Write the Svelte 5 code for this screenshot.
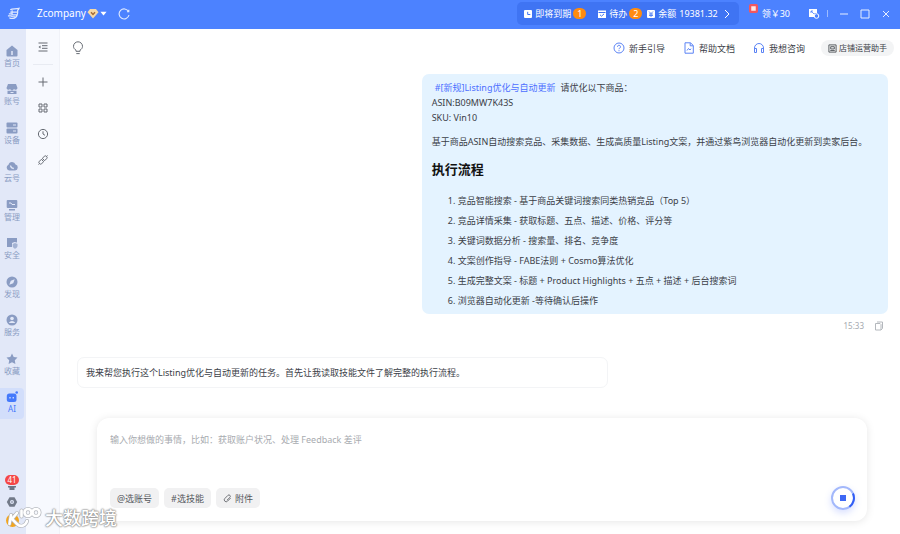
<script lang="ts">
	const navItems = [
		{icon: "home", label: "首页"},
		{icon: "shop", label: "账号"},
		{icon: "server", label: "设备"},
		{icon: "cloud", label: "云号"},
		{icon: "monitor", label: "管理"},
		{icon: "shield", label: "安全"},
		{icon: "compass", label: "发现"},
		{icon: "user", label: "服务"},
		{icon: "star", label: "收藏"},
		{icon: "robot", label: "AI"}
	];

	const steps = [
		"竞品智能搜索 - 基于商品关键词搜索同类热销竞品（Top 5）",
		"竞品详情采集 - 获取标题、五点、描述、价格、评分等",
		"关键词数据分析 - 搜索量、排名、竞争度",
		"文案创作指导 - FABE法则 + Cosmo算法优化",
		"生成完整文案 - 标题 + Product Highlights + 五点 + 描述 + 后台搜索词",
		"浏览器自动化更新 -等待确认后操作"
	];

	let active = $state("AI");
	let message = $state("");
</script>

<div class="app">
	<header class="titlebar">
		<svg class="logo" viewBox="0 0 14 14" fill="none" stroke="#dfe9ff" stroke-width="1.3">
			<path d="M3.500 3C6 1.500 9 2.500 13 1.500c-.5 1.500-1 1.800-1.500 2 .3 4-.5 7-3.500 8.500-2 .6-4 .4-5.500-.5M3.500 5.500h8M2 7.500h3l1 1h4.500M1 9.500h3.500l1 1h3.500M5.500 3.500v4" />
		</svg>
		<button class="company">
			Zcompany
			<svg class="gem" viewBox="0 0 12 11">
				<path d="M3 1h6l2.500 3.300L6 10.500.5 4.300z" fill="#f7d9a5" />
				<path d="M4 4.300 6 6.500l2-2.200" fill="none" stroke="#a36a35" stroke-width="1.400" />
			</svg>
			<svg class="caret" viewBox="0 0 8 5"><path d="M.5.500h7L4 4.800z" fill="#fff" /></svg>
		</button>
		<button class="refresh" aria-label="刷新">
			<svg viewBox="0 0 12 12" fill="none" stroke="#dfe9ff" stroke-width="1.100">
				<path d="M10.500 3.500A5 5 0 1 0 11 7M10.800 1.800v2H9" />
			</svg>
		</button>
		<div class="account">
			<button>
				<svg viewBox="0 0 10 10"><rect x="1" y="1" width="8" height="8" rx="1" fill="#fff" /><path d="M4.700 2.800v2.700h2.600" fill="none" stroke="#3f74f3" /></svg>
				即将到期 <span class="count">1</span>
			</button>
			<button class="todo">
				<svg viewBox="0 0 10 10"><path d="M1 1.500h8V9H1z" fill="#fff" /><path d="M1.500 3.500h7M3 5.800l1.500 1.400L7 4.900" fill="none" stroke="#3f74f3" /></svg>
				待办 <span class="count">2</span>
			</button>
			<button class="balance">
				<svg viewBox="0 0 10 10"><rect x="1" y="1" width="8" height="8" rx="1" fill="#fff" /><path d="m3 2.500 2 2 2-2M5 4.500V8M3 5h4M3 6.500h4" fill="none" stroke="#3f74f3" stroke-width=".8" /></svg>
				余额 <span class="amount">19381.32</span>
				<svg class="chevron" viewBox="0 0 6 10"><path d="m1 1 4 4-4 4" fill="none" stroke="#fff" /></svg>
			</button>
		</div>
		<button class="gift">
			<svg viewBox="0 0 10 10"><rect width="10" height="10" rx="2" fill="#f2575f" /><path d="M2.500 2.500h5v5h-5z" fill="#ffe9e4" /></svg>
			领￥30
		</button>
		<button class="window-tool" aria-label="切换窗口">
			<svg viewBox="0 0 12 12"><path d="M1 1h8v4H6.500v4H1z" fill="#fff" /><path d="m3 3 3 3M3 5V3h2" fill="none" stroke="#4c82ff" stroke-width=".8" /><circle cx="8.500" cy="8" r="2.300" fill="none" stroke="#fff" /></svg>
		</button>
		<span class="bar"></span>
		<button class="win" aria-label="最小化"><svg viewBox="0 0 10 10"><path d="M1 5h8" /></svg></button>
		<button class="win" aria-label="最大化"><svg viewBox="0 0 10 10"><path d="M1 1h8v8H1z" /></svg></button>
		<button class="win" aria-label="关闭"><svg viewBox="0 0 10 10"><path d="m2 2 6 6M8 2 2 8" /></svg></button>
	</header>

	<div class="body">
		<aside class="sidebar">
			<nav>
				{#each navItems as item}
					<button class:active={active === item.label} onclick={() => (active = item.label)}>
						<svg viewBox="0 0 12 12" fill="currentColor">
							{#if item.icon === "home"}
								<path d="M6 .500 11.500 5v5.500a1 1 0 0 1-1 1h-9a1 1 0 0 1-1-1V5z" /><path d="M6 6v4" stroke="#e2e8f8" stroke-width="1.500" />
							{:else if item.icon === "shop"}
								<path d="M2 1h8l1.500 4a2 2 0 0 1-3.600 1 2 2 0 0 1-3.800 0A2 2 0 0 1 .500 5zM1.500 7.700h9V11h-9z" /><path d="M4.500 9.500h3" stroke="#e2e8f8" />
							{:else if item.icon === "server"}
								<rect x=".5" y=".5" width="11" height="5" rx="1" /><rect x=".5" y="6.500" width="11" height="5" rx="1" /><path d="M7 3h3M7 9h3" stroke="#e2e8f8" />
							{:else if item.icon === "cloud"}
								<path d="M3 10.500a3 3 0 0 1-.5-5.700 3.600 3.600 0 0 1 7-.2A3 3 0 0 1 9 10.500z" /><path d="M4.500 5.500c.3 2 1.300 3 3.300 3" stroke="#e2e8f8" stroke-width="1.300" fill="none" />
							{:else if item.icon === "monitor"}
								<rect x=".7" y="1" width="10.600" height="8" rx="1" /><path d="M3 10h6v1.500H3z" /><path d="M3 4h2l1 1.500h3" stroke="#e2e8f8" fill="none" />
							{:else if item.icon === "shield"}
								<path d="M1 1h10v4.500L8.500 5 6 6v4H1z" /><path d="m9 6 2.500 1v2c0 1.200-1 2-2.500 2.700C7.500 11 6.700 10.200 6.700 9V7z" opacity=".7" />
							{:else if item.icon === "compass"}
								<circle cx="6" cy="6" r="5.500" /><path d="M8.700 3.300 7.200 7.200 3.300 8.700l1.500-3.900z" fill="#e2e8f8" />
							{:else if item.icon === "user"}
								<circle cx="6" cy="6" r="5.500" /><circle cx="6" cy="4.500" r="1.800" fill="#e2e8f8" /><path d="M2.800 9c1.200-2.700 5.200-2.700 6.400 0z" fill="#e2e8f8" />
							{:else if item.icon === "star"}
								<path d="m6 .500 1.700 3.400 3.800.6-2.700 2.700.6 3.800L6 9.200 2.600 11l.6-3.800L.500 4.500l3.800-.6z" />
							{:else}
								<rect x=".8" y="2.500" width="9.700" height="8.500" rx="2.500" /><path d="M4 6v1.500M7.200 6v1.500" stroke="#fff" /><circle cx="10.700" cy="1.500" r="1.300" />
							{/if}
						</svg>
						{item.label}
					</button>
				{/each}
			</nav>
			<div class="foot">
				<button aria-label="消息">
					<span class="unread">41</span>
					<svg class="bell" viewBox="0 0 8 4"><path d="M0 0h8v1.500H6.500V4h-5V1.500H0z" fill="#6d7484" /></svg>
				</button>
				<button aria-label="设置">
					<svg viewBox="0 0 12 12"><path d="m3.500 1.200h5L11.200 6 8.500 10.800h-5L.8 6z" fill="#727a89" /><circle cx="6" cy="6" r="2" fill="#dfe5f6" /><circle cx="6" cy="6" r=".8" fill="#727a89" /></svg>
				</button>
				<button class="avatar" aria-label="我的"></button>
			</div>
		</aside>

		<aside class="tools">
			<button aria-label="展开列表">
				<svg viewBox="0 0 12 12"><path d="M1.500 2h9M5 4.700h5.500M5 7.300h5.500M1.500 10h9" /><path d="M3.500 4.500v3L1.500 6z" fill="#666b73" stroke="none" /></svg>
			</button>
			<hr />
			<button aria-label="新建"><svg viewBox="0 0 12 12"><path d="M6 1.500v9M1.500 6h9" /></svg></button>
			<button aria-label="应用"><svg viewBox="0 0 12 12"><path d="M2 2h3v3H2zM7 2h3v3H7zM2 7h3v3H2zM7 7h3v3H7z" /></svg></button>
			<button aria-label="历史"><svg viewBox="0 0 12 12"><circle cx="6" cy="6" r="4.600" /><path d="M6 3.300V6l2 1.300" /></svg></button>
			<button aria-label="连接"><svg viewBox="0 0 12 12"><path d="m5.300 4.300 2-1.900a1.500 1.500 0 0 1 2.300 2.300l-2 2zM6.700 7.700l-2 1.900a1.500 1.500 0 0 1-2.300-2.300l2-2zM9.500 2.500 10.500 1.500M1.500 10.500l1-1" /></svg></button>
		</aside>

		<main>
			<div class="topline">
				<button class="bulb" aria-label="灵感">
					<svg viewBox="0 0 12 14"><path d="M4 10.300V9.200C2.500 8.300 1.500 7 1.500 5.300a4.500 4.500 0 0 1 9 0C10.500 7 9.500 8.300 8 9.200v1.100zM4.300 12.600h3.400" /></svg>
				</button>
				<a href="#guide">
					<svg viewBox="0 0 12 12"><circle cx="6" cy="6" r="5" /><path d="M4.500 4.800a1.500 1.500 0 1 1 2.200 1.300c-.5.2-.7.500-.7 1.100M6 8.200v1" /></svg>
					新手引导
				</a>
				<a href="#docs">
					<svg viewBox="0 0 12 12"><path d="M2 .800h5.500L10.300 3.500v7.700H2zM7.200 1v2.800h3M4 8.500l1.500-2L7 8l1-1.300" /></svg>
					帮助文档
				</a>
				<a href="#contact">
					<svg viewBox="0 0 12 12"><path d="M1.500 8V6a4.500 4.500 0 0 1 9 0v2M1.500 6.500h2v4h-2zM8.500 6.500h2v4h-2z" /></svg>
					我想咨询
				</a>
				<button class="assistant">
					<svg viewBox="0 0 10 10"><path d="M1 1h8v8H1zM3 3h4v2.500H3zM2.500 7.200h5" /></svg>
					店铺运营助手
				</button>
			</div>

			<section class="thread">
				<article class="request">
					<p><a class="skill" href="#skill">#[新规]Listing优化与自动更新</a>请优化以下商品：<br />ASIN:B09MW7K43S<br />SKU: Vin10</p>
					<p>基于商品ASIN自动搜索竞品、采集数据、生成高质量Listing文案，并通过紫鸟浏览器自动化更新到卖家后台。</p>
					<h2>执行流程</h2>
					<ol>
						{#each steps as step}
							<li>{step}</li>
						{/each}
					</ol>
				</article>
				<div class="meta">
					<time>15:33</time>
					<button aria-label="复制">
						<svg viewBox="0 0 10 10"><path d="M3 1h5.500v6.500L7 9M1.500 2.500H6L7 3.500V9H1.500z" /></svg>
					</button>
				</div>
				<article class="reply">我来帮您执行这个Listing优化与自动更新的任务。首先让我读取技能文件了解完整的执行流程。</article>
			</section>

			<form class="composer" onsubmit={(e) => e.preventDefault()}>
				<textarea bind:value={message} aria-label="消息" placeholder="输入你想做的事情，比如：获取账户状况、处理 Feedback 差评"></textarea>
				<div class="actions">
					<button type="button">@选账号</button>
					<button type="button">#选技能</button>
					<button type="button">
						<svg viewBox="0 0 10 10"><path d="M8.500 4.500 5 8a2 2 0 0 1-3-3l3.500-3.500a1.500 1.500 0 0 1 2.200 2.200L4.300 7" /></svg>
						附件
					</button>
					<button type="button" class="stop" aria-label="停止">
						<svg viewBox="0 0 24 24">
							<circle cx="12" cy="12" r="11" fill="#fff" stroke="#a3b8fb" stroke-width="2" />
							<path d="M22 7.500A11 11 0 0 1 18.500 20.800" fill="none" stroke="#315df5" stroke-width="2" />
							<rect x="9" y="9" width="6" height="6" fill="#3e68f5" stroke="none" />
						</svg>
					</button>
				</div>
			</form>
		</main>
	</div>

	<div class="watermark">
		<svg viewBox="0 0 34 24" fill="none" stroke-linecap="round">
			<g stroke="#b4b7bd" stroke-width="4"><path d="M3 9 1.500 18M9 7 4 13l5 5c4 4 9 1 10-3M13.500 4.500v6" /><circle cx="20" cy="6.500" r="3.500" /><circle cx="28" cy="6.500" r="3.500" /></g>
			<g stroke="#fff" stroke-width="2.600"><path d="M3 9 1.500 18M9 7 4 13l5 5c4 4 9 1 10-3M13.500 4.500v6" /><circle cx="20" cy="6.500" r="3.500" /><circle cx="28" cy="6.500" r="3.500" /></g>
		</svg>
		<span>大数跨境</span>
	</div>
</div>

<style>
	:global(body) {
		margin: 0;
	}

	.app {
		position: relative;
		display: flex;
		flex-direction: column;
		min-height: 100vh;
		font-family: "Noto Sans", "Noto Sans CJK SC", sans-serif;
		font-size: 9px;
		line-height: 15px;
		color: #3b4047;
		background: #fff;
	}

	button {
		display: flex;
		align-items: center;
		justify-content: center;
		border: 0;
		padding: 0;
		background: none;
		color: inherit;
		font: inherit;
		white-space: nowrap;
		cursor: pointer;
	}

	svg {
		display: block;
		flex: none;
		width: 12px;
		height: 12px;
	}

	a {
		color: inherit;
		text-decoration: none;
	}

	.titlebar {
		display: flex;
		align-items: center;
		height: 29px;
		box-sizing: border-box;
		padding: 0 9px 2px 7px;
		background: #4c82ff;
		color: #fff;
	}

	.logo {
		width: 13px;
		height: 13px;
	}

	.company {
		gap: 1px;
		margin-left: 17px;
		font-size: 10px;
	}

	.gem {
		width: 12px;
		height: 11px;
	}

	.caret {
		width: 7px;
		height: 5px;
	}

	.refresh {
		margin-left: 11px;
	}

	.account {
		display: flex;
		align-items: center;
		height: 23px;
		box-sizing: border-box;
		margin-left: auto;
		padding: 0 9px 0 6px;
		border-radius: 5px;
		background: #3f74f3;
	}

	.account button {
		gap: 2px;
	}

	.account svg {
		width: 10px;
		height: 10px;
	}

	.account .todo {
		margin-left: 11px;
	}

	.account .balance {
		margin-left: 4px;
	}

	.account .chevron {
		width: 6px;
		margin-left: 4px;
	}

	.amount {
		margin-left: 1px;
	}

	.count {
		min-width: 13px;
		border-radius: 6px;
		background: #ff8b0f;
		line-height: 11px;
		text-align: center;
	}

	.gift {
		margin-left: 10px;
		gap: 4px;
	}

	.gift svg {
		width: 9px;
		height: 9px;
		margin-bottom: 10px;
	}

	.window-tool {
		margin-left: 18px;
	}

	.bar {
		width: 1px;
		height: 7px;
		margin: 0 11px 0 7px;
		background: #9dbcff;
	}

	.win {
		margin-left: 11px;
	}

	.bar + .win {
		margin-left: 0;
	}

	.win svg {
		width: 10px;
		height: 10px;
		fill: none;
		stroke: #e6eeff;
	}

	.body {
		display: flex;
		flex: 1;
	}

	.sidebar {
		display: flex;
		flex-direction: column;
		flex: 0 0 26px;
		background: #e2e8f8;
	}

	nav {
		display: grid;
		grid-template-rows: repeat(10, 1fr);
		align-items: start;
		height: 385px;
		padding-top: 12px;
	}

	nav button {
		flex-direction: column;
		height: 31px;
		margin-right: 2px;
		color: #8a9cc3;
		font-size: 8px;
		line-height: 12px;
	}

	nav button.active {
		border-radius: 0 4px 4px 0;
		background: #d2defb;
		color: #4479fb;
	}

	.foot {
		display: flex;
		flex-direction: column;
		align-items: center;
		gap: 6px;
		margin: auto 2px 7px 0;
	}

	.foot button {
		flex-direction: column;
	}

	.unread {
		width: 14px;
		border-radius: 5px;
		background: #f44747;
		color: #fff;
		font-size: 8px;
		line-height: 10px;
		text-align: center;
	}

	.bell {
		width: 8px;
		height: 4px;
		margin-top: 1px;
	}

	.avatar {
		width: 13px;
		height: 13px;
		border-radius: 50%;
		background: #f2a51d;
	}

	.tools {
		display: flex;
		flex-direction: column;
		align-items: center;
		flex: 0 0 34px;
		gap: 14px;
		box-sizing: border-box;
		padding-top: 12px;
		border-right: 1px solid #f0f2f8;
		background: #f7f9fe;
	}

	.tools svg,
	.bulb svg {
		fill: none;
		stroke: #666b73;
	}

	hr {
		width: 20px;
		margin: -3px 0;
		border: 0;
		border-top: 1px solid #e8ebf2;
	}

	main {
		display: flex;
		flex-direction: column;
		flex: 1;
		min-width: 0;
		background: #fff;
	}

	.topline {
		display: flex;
		align-items: center;
		gap: 18px;
		padding: 11px 6px 0 12px;
	}

	.topline a {
		display: flex;
		align-items: center;
		gap: 4px;
	}

	.topline a svg {
		fill: none;
		stroke: #5b83f5;
	}

	.bulb {
		margin-right: auto;
	}

	.bulb svg {
		height: 14px;
	}

	.topline .assistant {
		gap: 2px;
		margin-left: -2px;
		padding: 0 7px;
		border-radius: 8px;
		background: #f3f4f5;
		font-size: 8px;
		line-height: 16px;
	}

	.assistant svg {
		width: 9px;
		height: 9px;
		fill: none;
		stroke: #4b4f55;
	}

	.thread {
		display: flex;
		flex-direction: column;
		padding: 18px 12px 0 17px;
	}

	.request {
		margin-left: 42.5%;
		padding: 6px 10px 3px;
		border-radius: 7px;
		background: #e4f3ff;
	}

	.request p {
		margin: 0 0 9px;
	}

	.skill {
		padding: 0 5px 0 3px;
		color: #4c6fff;
	}

	h2 {
		margin: 10px 0 12px;
		color: #111;
		font-size: 13px;
		line-height: 20px;
	}

	ol {
		margin: 0;
		padding-left: 26px;
		line-height: 20px;
	}

	.meta {
		display: flex;
		align-items: center;
		align-self: flex-end;
		gap: 10px;
		padding: 4px 4px 0 0;
		color: #a5a9af;
		font-size: 8px;
	}

	.meta svg {
		width: 10px;
		height: 10px;
		fill: none;
		stroke: #b4b8bd;
	}

	.reply {
		width: 65.5%;
		box-sizing: border-box;
		margin-top: 24px;
		padding: 7px 8px;
		border: 1px solid #f3f4f6;
		border-radius: 7px;
	}

	.composer {
		margin: auto 33px 13px 37px;
		padding: 14px 12px 11px 13px;
		border-radius: 12px;
		background: #fff;
		box-shadow: 0 1px 9px rgb(0 0 0 / 10%);
	}

	textarea {
		display: block;
		width: 100%;
		height: 54px;
		box-sizing: border-box;
		border: 0;
		outline: 0;
		padding: 0;
		background: none;
		color: inherit;
		font: inherit;
		resize: none;
	}

	textarea::placeholder {
		color: #a8abb0;
		opacity: 1;
	}

	.actions {
		display: flex;
		align-items: center;
		gap: 5px;
	}

	.actions button {
		gap: 3px;
		height: 20px;
		padding: 0 7px;
		border-radius: 5px;
		background: #f1f1f2;
		color: #55585d;
	}

	.actions svg {
		width: 9px;
		height: 9px;
		fill: none;
		stroke: #66696e;
	}

	.actions .stop {
		height: 24px;
		margin-left: auto;
		padding: 0;
		border-radius: 50%;
		background: none;
		box-shadow: 0 3px 7px rgb(77 110 255 / 22%);
	}

	.actions .stop svg {
		width: 24px;
		height: 24px;
	}

	.watermark {
		position: absolute;
		left: 8px;
		bottom: 4px;
		display: flex;
		align-items: center;
		gap: 3px;
		color: #fff;
		font-size: 18px;
		font-weight: 500;
		line-height: 24px;
		text-shadow: 0 0 2px #888, 0 0 2px #888, 0 0 1px #888;
		pointer-events: none;
	}

	.watermark svg {
		width: 34px;
		height: 24px;
	}
</style>
